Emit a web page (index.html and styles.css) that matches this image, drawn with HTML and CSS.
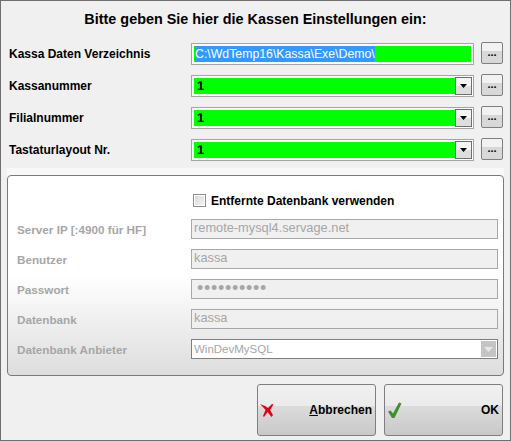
FILE: index.html
```html
<!DOCTYPE html>
<html>
<head>
    <title>Kassen Einstellungen</title>
    <meta charset="utf-8">
    <link rel="stylesheet" href="styles.css">
</head>
<body>
    <div class="window">
        <h1>Bitte geben Sie hier die Kassen Einstellungen ein:</h1>

        <div class="settings">
            <div class="row">
                <label>Kassa Daten Verzeichnis</label>
                <div class="field"><div class="value"><span class="selected">C:\WdTemp16\Kassa\Exe\Demo\</span></div></div>
                <div class="more">...</div>
            </div>
            <div class="row">
                <label>Kassanummer</label>
                <div class="field"><div class="value number">1</div><div class="drop"><svg width="9" height="5" viewBox="0 0 9 5"><path d="M1 0h7L4.500 4z"/></svg></div></div>
                <div class="more">...</div>
            </div>
            <div class="row">
                <label>Filialnummer</label>
                <div class="field"><div class="value number">1</div><div class="drop"><svg width="9" height="5" viewBox="0 0 9 5"><path d="M1 0h7L4.500 4z"/></svg></div></div>
                <div class="more">...</div>
            </div>
            <div class="row">
                <label>Tastaturlayout Nr.</label>
                <div class="field"><div class="value number">1</div><div class="drop"><svg width="9" height="5" viewBox="0 0 9 5"><path d="M1 0h7L4.500 4z"/></svg></div></div>
                <div class="more">...</div>
            </div>
        </div>

        <div class="panel-strip">
            <div class="panel">
                <div class="check-row">
                    <span class="checkbox"></span>
                    <span class="check-label">Entfernte Datenbank verwenden</span>
                </div>
                <div class="remote-row">
                    <label>Server IP [:4900 für HF]</label>
                    <div class="input">remote-mysql4.servage.net</div>
                </div>
                <div class="remote-row">
                    <label>Benutzer</label>
                    <div class="input">kassa</div>
                </div>
                <div class="remote-row">
                    <label>Passwort</label>
                    <div class="input password">••••••••••</div>
                </div>
                <div class="remote-row">
                    <label>Datenbank</label>
                    <div class="input">kassa</div>
                </div>
                <div class="remote-row">
                    <label>Datenbank Anbieter</label>
                    <div class="input select">
                        <span class="select-text">WinDevMySQL</span>
                        <span class="select-drop"><svg width="9" height="5" viewBox="0 0 9 5"><path d="M0 0h9L4.500 5z"/></svg></span>
                    </div>
                </div>
            </div>
        </div>

        <div class="actions">
            <button class="action">
                <svg class="cancel-icon" width="14" height="15" viewBox="0 0 14 15"><path d="M0 1l5 2 3 2 4-4 1.500.5L10 7l3 5-1.500 2-4-5L4 14l-1-1 2.500-6L3 4z" fill="#e0000f"/></svg>
                <span><u>A</u>bbrechen</span>
            </button>
            <button class="action">
                <svg width="15" height="17" viewBox="0 0 15 17"><path d="M0 9.500l2.500-1 2.500 3L11 .5l2.500 1L6.500 16H4z" fill="#3f8f2a"/></svg>
                <span>OK</span>
            </button>
        </div>
    </div>
</body>
</html>
```

FILE: styles.css
```css
* {
    box-sizing: border-box;
}

body {
    margin: 0;
    font-family: "Liberation Sans", Arial, sans-serif;
    color: #000000;
}

.window {
    width: 511px;
    height: 441px;
    background: #f0f0f0;
    border: 1px solid #6f6f6f;
    display: flex;
    flex-direction: column;
    overflow: hidden;
}

h1 {
    margin: 10px 0 0;
    font-size: 14.4px;
    line-height: 16px;
    text-align: center;
    font-weight: bold;
}

.settings {
    margin-top: 16px;
    display: flex;
    flex-direction: column;
    gap: 10px;
}

.row {
    display: flex;
    align-items: center;
    height: 22px;
    padding-left: 8px;
}

.row label {
    width: 182px;
    font-size: 12px;
    font-weight: bold;
}

.field {
    width: 283px;
    height: 22px;
    border: 1px solid #a5a5a5;
    background: #ffffff;
    padding: 2px;
    display: flex;
}

.value {
    flex: 1;
    background: #00ff00;
    font-size: 12px;
    line-height: 16px;
    padding-left: 1px;
    white-space: nowrap;
}

.selected {
    display: inline-block;
    background: #3399ff;
    color: #ffffff;
    font-size: 12.3px;
}

.number {
    padding-left: 3px;
    font-size: 13px;
    font-weight: bold;
}

.drop {
    width: 17px;
    margin: -1px -1px -1px 0;
    border: 1px solid #6f6f6f;
    background: linear-gradient(#f4f4f4 50%, #dedede 50%);
    display: flex;
    align-items: center;
    justify-content: center;
}

.more {
    width: 22px;
    height: 22px;
    margin-top: -2px;
    margin-left: 7px;
    border: 1px solid #7f7f7f;
    border-radius: 2px;
    background: linear-gradient(#f2f2f2 42%, #d8d8d8 42%);
    font-size: 11px;
    font-weight: bold;
    line-height: 19px;
    text-align: center;
}

.panel-strip {
    margin: 7px 6px 0;
    padding-top: 7px;
    background: #f8f8f8;
}

.panel {
    height: 201px;
    border: 1px solid #7a7a7a;
    border-radius: 4px;
    padding: 0 5px 0 9px;
    background: linear-gradient(#ffffff 50%, #dddddd 100%);
}

.check-row {
    display: flex;
    align-items: center;
    height: 13px;
    margin: 18px 0 12px;
    padding-left: 176px;
}

.checkbox {
    width: 13px;
    height: 13px;
    border: 1px solid #8e8e8e;
    background: linear-gradient(135deg, #d8d8d8, #f4f4f4);
    box-shadow: inset 0 0 0 1px #ffffff;
}

.check-label {
    margin-left: 5px;
    font-size: 12px;
    font-weight: bold;
}

.remote-row {
    display: flex;
    align-items: center;
    height: 20px;
    margin-bottom: 10px;
}

.remote-row label {
    width: 174px;
    font-size: 11.7px;
    font-weight: bold;
    color: #a6a6a6;
}

.input {
    width: 307px;
    height: 20px;
    border: 1px solid #a8a8a8;
    background: #f0f0f0;
    color: #a6a6a6;
    font-size: 12.8px;
    line-height: 16px;
    padding-left: 2px;
}

.password {
    padding-left: 5px;
    font-size: 18px;
    line-height: 17px;
    letter-spacing: 0.7px;
}

.select {
    display: flex;
    justify-content: space-between;
    background: #ffffff;
    border-color: #7f7f7f;
    font-size: 11.5px;
    line-height: 18px;
    padding: 0 1px 0 2px;
}

.select-drop {
    width: 15px;
    height: 16px;
    margin-top: 1px;
    background: #c4c4c4;
    display: flex;
    align-items: center;
    justify-content: center;
}

.select-drop path {
    fill: #e8e8e8;
}

.actions {
    margin-top: 8px;
    padding-left: 256px;
    display: flex;
    gap: 8px;
}

.action {
    width: 119px;
    height: 52px;
    padding: 0 3px;
    border: 1px solid #7f7f7f;
    border-radius: 3px;
    background: linear-gradient(#f0f0f0, #ebebeb 42%, #dcdcdc 42%, #c8c8c8 100%);
    display: flex;
    align-items: center;
    justify-content: space-between;
    font-family: inherit;
    font-size: 12px;
    font-weight: bold;
    color: #000000;
}

.cancel-icon {
    margin-left: -1px;
}
```
